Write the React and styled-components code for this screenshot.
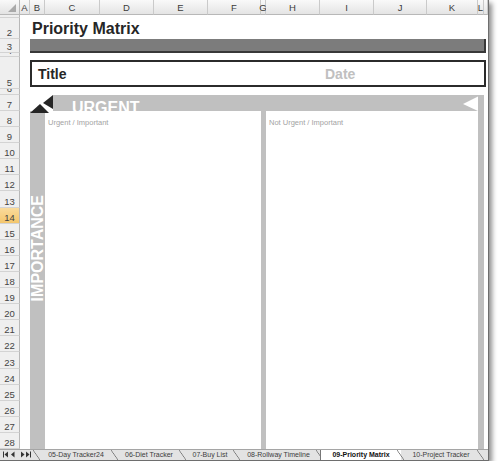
import React from 'react'
import styled, { createGlobalStyle } from 'styled-components'

const GlobalStyle = createGlobalStyle`
  html, body {
    margin: 0;
    padding: 0;
    background: #fff;
  }
  body {
    font-family: "Liberation Sans", Arial, sans-serif;
  }
`

const COLS = ['A', 'B', 'C', 'D', 'E', 'F', 'G', 'H', 'I', 'J', 'K', 'L']
const ROWS = Array.from({ length: 28 }, (_, i) => i + 1)
const TABS = [
  { name: '05-Day Tracker24', w: 78 },
  { name: '06-Diet Tracker', w: 68 },
  { name: '07-Buy List', w: 54 },
  { name: '08-Rollway Timeline', w: 83 },
  { name: '09-Priority Matrix', w: 80, active: true },
  { name: '10-Project Tracker', w: 80 },
]

const Window = styled.div`
  width: 488px;
  background: #fff;
  border-right: 1px solid #6e6e6e;
  border-bottom: 1px solid #6e6e6e;
  box-shadow: 3px 3px 5px rgba(0, 0, 0, 0.45);
  font-family: "Liberation Sans", Arial, sans-serif;
`

// tracks: row header, A..L (2..13), then the sliver past L (14)
const Sheet = styled.div`
  display: grid;
  grid-template-columns: 20px 10px 15px 55px 54px 54px 53px 5px 54px 54px 53px 51px 6px 1fr;
  grid-template-rows: 15px 3px 21px 14px 4px 32px 6px 16px repeat(21, 16.1px);
`

const Corner = styled.div`
  grid-column: 1;
  grid-row: 1;
  position: relative;
  background: linear-gradient(#f9f9f9, #e3e3e3);
  border-right: 1px solid #b8b8b8;
  border-bottom: 1px solid #b8b8b8;
  &::after {
    content: '';
    position: absolute;
    right: 3px;
    bottom: 2px;
    border-left: 8px solid transparent;
    border-bottom: 8px solid #a9a9a9;
  }
`

const ColHead = styled.div`
  grid-row: 1;
  grid-column: ${p => p.$col};
  display: flex;
  align-items: center;
  justify-content: center;
  background: linear-gradient(#f9f9f9, #e4e4e4);
  border-right: 1px solid #cacaca;
  border-bottom: 1px solid #b8b8b8;
  font-size: 9.5px;
  color: #3b3b3b;
`

const RowHead = styled.div`
  grid-column: 1;
  grid-row: ${p => p.$row};
  display: flex;
  align-items: flex-end;
  justify-content: center;
  overflow: hidden;
  background: ${p => (p.$active ? 'linear-gradient(#fadb9c, #f3c66c)' : '#efefef')};
  border-right: 1px solid #b8b8b8;
  border-bottom: 1px solid #d3d3d3;
  font-size: 9.5px;
  line-height: 11px;
  color: #444;
`

const SheetTitle = styled.div`
  grid-column: 3 / 10;
  grid-row: 3;
  align-self: end;
  padding: 0 0 1px 2px;
  font-size: 16px;
  line-height: 18px;
  font-weight: bold;
  color: #262626;
  white-space: nowrap;
`

const DarkBar = styled.div`
  grid-column: 3 / 15;
  grid-row: 4;
  margin-right: 2px;
  background: #7c7c7c;
  border-bottom: 2px solid #383838;
  border-right: 2px solid #383838;
`

const TitleBox = styled.div`
  grid-column: 3 / 15;
  grid-row: 6;
  margin: 3px 2px 2px 0;
  display: flex;
  align-items: center;
  border: 2px solid #2b2b2b;
  font-size: 14px;
  font-weight: bold;
`

const TitleText = styled.span`
  width: 287px;
  padding-left: 6px;
  color: #262626;
`

const DateText = styled.span`
  color: #c0c0c0;
`

const CornerArrow = styled.svg`
  grid-column: 3 / 5;
  grid-row: 8;
  overflow: visible;
  display: block;
`

const UrgentBar = styled.div`
  grid-column: 4 / 13;
  grid-row: 8;
  margin-left: 8px;
  display: flex;
  height: 16px;
  overflow: hidden;
  background: #c0c0c0;
`

const BarLabel = styled.span`
  padding: 5px 0 0 19px;
  font-size: 16px;
  line-height: 16px;
  font-weight: bold;
  color: #fff;
  white-space: nowrap;
`

const Notch = styled.svg`
  margin-left: auto;
  flex: none;
  display: block;
`

const SideBar = styled.div`
  grid-column: 3;
  grid-row: 9 / 30;
  display: flex;
  justify-content: center;
  align-items: flex-start;
  padding-top: 84px;
  overflow: hidden;
  background: #c0c0c0;
`

const VerticalLabel = styled.span`
  writing-mode: vertical-rl;
  transform: rotate(180deg);
  font-size: 16px;
  line-height: 15px;
  font-weight: bold;
  color: #fff;
  white-space: nowrap;
`

const GrayColumn = styled.div`
  grid-column: ${p => p.$col};
  grid-row: ${p => p.$from} / 30;
  background: #c0c0c0;
`

const QuadLabel = styled.div`
  grid-column: ${p => p.$cols};
  grid-row: 9;
  padding: 7px 0 0 3px;
  font-size: 7.5px;
  color: #a3a3a3;
  white-space: nowrap;
`

const TabBar = styled.div`
  display: flex;
  height: 10px;
  background: #e3e3e3;
  border-top: 1px solid #a5a5a5;
  font-size: 7px;
  color: #3c3c3c;
`

const TabNav = styled.div`
  width: 37px;
  flex: none;
  display: flex;
  align-items: center;
  padding-left: 3px;
  box-sizing: border-box;
  position: relative;
  &::after {
    content: '';
    position: absolute;
    right: -3px;
    top: 0;
    height: 100%;
    width: 7px;
    background: linear-gradient(to top right, transparent 44%, #777 50%, transparent 56%);
  }
`

const Tab = styled.div`
  width: ${p => p.$w}px;
  flex: none;
  position: relative;
  display: flex;
  align-items: center;
  justify-content: center;
  white-space: nowrap;
  background: ${p => (p.$active ? '#fff' : 'transparent')};
  font-weight: ${p => (p.$active ? 'bold' : 'normal')};
  color: ${p => (p.$active ? '#111' : '#3c3c3c')};
  border-left: ${p => (p.$active ? '1px solid #777' : 'none')};
  &::after {
    content: '';
    position: absolute;
    right: -3px;
    top: 0;
    height: 100%;
    width: 7px;
    background: linear-gradient(to top right, transparent 44%, #777 50%, transparent 56%);
  }
`

const App = () => {
  return (
    <>
      <GlobalStyle />
      <Window>
        <Sheet>
          <Corner />
          {COLS.map((c, i) => (
            <ColHead key={c} $col={i + 2}>{c}</ColHead>
          ))}
          <ColHead $col={14} />
          {ROWS.map(r => (
            <RowHead key={r} $row={r + 1} $active={r === 14}>{r}</RowHead>
          ))}

          <SheetTitle>Priority Matrix</SheetTitle>
          <DarkBar />
          <TitleBox>
            <TitleText>Title</TitleText>
            <DateText>Date</DateText>
          </TitleBox>

          <SideBar>
            <VerticalLabel>IMPORTANCE</VerticalLabel>
          </SideBar>
          <GrayColumn $col={8} $from={9} />
          <GrayColumn $col={13} $from={8} />

          <UrgentBar>
            <BarLabel>URGENT</BarLabel>
            <Notch width="15" height="16" viewBox="0 0 15 16">
              <polygon points="15,1.5 0,9 15,16" fill="#fff" />
            </Notch>
          </UrgentBar>
          <CornerArrow width="24" height="18" viewBox="0 0 24 18">
            <polygon points="23,0 23,14 13,8" fill="#262626" />
            <polygon points="0,18 10,9 19,18" fill="#262626" />
          </CornerArrow>

          <QuadLabel $cols="4 / 8">Urgent / Important</QuadLabel>
          <QuadLabel $cols="9 / 13">Not Urgent / Important</QuadLabel>
        </Sheet>

        <TabBar>
          <TabNav>
            <svg width="28" height="7" viewBox="0 0 28 7">
              <rect x="0" y="0.5" width="1" height="6" fill="#333" />
              <polygon points="1.5,3.5 5,0.5 5,6.5" fill="#333" />
              <polygon points="8,3.5 11.5,0.5 11.5,6.5" fill="#333" />
              <polygon points="18,0.5 21.5,3.5 18,6.5" fill="#333" />
              <polygon points="23,0.5 26.5,3.5 23,6.5" fill="#333" />
              <rect x="27" y="0.5" width="1" height="6" fill="#333" />
            </svg>
          </TabNav>
          {TABS.map(t => (
            <Tab key={t.name} $w={t.w} $active={t.active}>{t.name}</Tab>
          ))}
        </TabBar>
      </Window>
    </>
  )
}

export default App
